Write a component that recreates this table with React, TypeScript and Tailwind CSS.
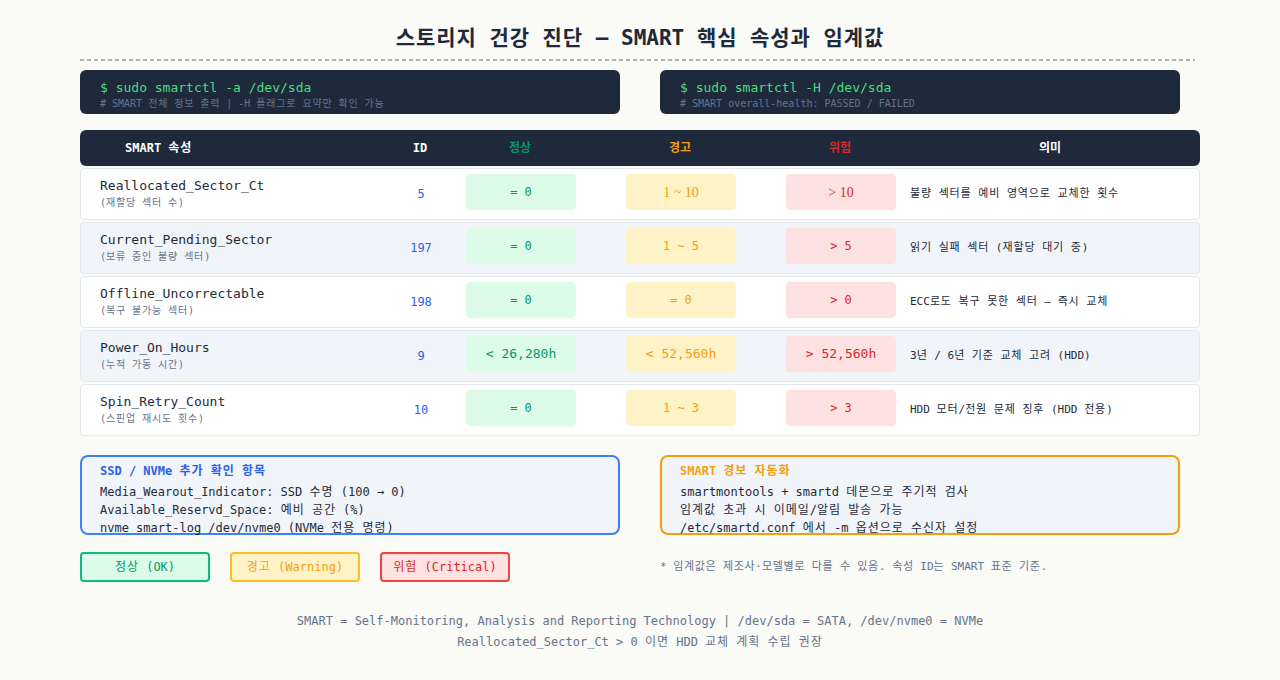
import React from 'react';

type Row = {
  name: string;
  sub: string;
  id: string;
  ok: string;
  warn: string;
  crit: string;
  meaning: string;
  big?: boolean;
  serif?: boolean;
};

const rows: Row[] = [
  { name: 'Reallocated_Sector_Ct', sub: '(재할당 섹터 수)', id: '5', ok: '= 0', warn: '1 ~ 10', crit: '> 10', meaning: '불량 섹터를 예비 영역으로 교체한 횟수', serif: true },
  { name: 'Current_Pending_Sector', sub: '(보류 중인 불량 섹터)', id: '197', ok: '= 0', warn: '1 ~ 5', crit: '> 5', meaning: '읽기 실패 섹터 (재할당 대기 중)' },
  { name: 'Offline_Uncorrectable', sub: '(복구 불가능 섹터)', id: '198', ok: '= 0', warn: '= 0', crit: '> 0', meaning: 'ECC로도 복구 못한 섹터 — 즉시 교체' },
  { name: 'Power_On_Hours', sub: '(누적 가동 시간)', id: '9', ok: '< 26,280h', warn: '< 52,560h', crit: '> 52,560h', meaning: '3년 / 6년 기준 교체 고려 (HDD)', big: true },
  { name: 'Spin_Retry_Count', sub: '(스핀업 재시도 횟수)', id: '10', ok: '= 0', warn: '1 ~ 3', crit: '> 3', meaning: 'HDD 모터/전원 문제 징후 (HDD 전용)' },
];

const grid = 'grid grid-cols-[300px_80px_120px_200px_120px_300px] items-center';

function K({ children, wide = 'tracking-[0.08em]' }: { children: string; wide?: string }) {
  return (
    <span>
      {children.split(/([\uAC00-\uD7A3]+)/).map((part, i) =>
        /[\uAC00-\uD7A3]/.test(part) ? (
          <span key={i} className={wide}>{part}</span>
        ) : (
          <React.Fragment key={i}>{part}</React.Fragment>
        )
      )}
    </span>
  );
}

function badgeSize(r: Row) {
  if (r.serif) return "font-['Liberation_Serif',serif] text-[14px]";
  return r.big ? 'text-[13px]' : 'text-[12px]';
}

export default function App() {
  return (
    <div className="w-[1280px] h-[680px] bg-[#fafaf6] font-['DejaVu_Sans_Mono','Noto_Sans_CJK_KR',monospace] text-[#1e293b] px-[80px] pt-[24px] overflow-hidden">
      <h1 className="text-center text-[21px] leading-[28px] font-bold text-[#1e293b]">
        <K wide="tracking-[0.045em]">스토리지 건강 진단 — SMART 핵심 속성과 임계값</K>
      </h1>
      <div className="mt-[7px] w-[1115px] h-[2px] bg-[repeating-linear-gradient(90deg,#b4b4b4_0_4px,transparent_4px_7px)]" />

      <div className="mt-[9px] flex gap-[40px]">
        <div className="w-[540px] h-[44px] bg-[#1e293b] rounded-[6px] px-[20px] pt-[10px]">
          <div className="text-[13px] leading-[16px] text-[#4ade80]">$ sudo smartctl -a /dev/sda</div>
          <div className="text-[10px] leading-[15px] text-[#64748b]"><K># SMART 전체 정보 출력 | -H 플래그로 요약만 확인 가능</K></div>
        </div>
        <div className="w-[520px] h-[44px] bg-[#1e293b] rounded-[6px] px-[20px] pt-[10px]">
          <div className="text-[13px] leading-[16px] text-[#4ade80]">$ sudo smartctl -H /dev/sda</div>
          <div className="text-[10px] leading-[15px] text-[#64748b]"># SMART overall-health: PASSED / FAILED</div>
        </div>
      </div>

      <div className="mt-[16px] flex flex-col gap-[2px]">
        <div className={`${grid} h-[36px] bg-[#1e293b] rounded-[6px] text-[12px] font-bold`}>
          <div className="pl-[45px] text-white"><K>SMART 속성</K></div>
          <div className="text-center text-white">ID</div>
          <div className="text-center text-[#059669]">정상</div>
          <div className="text-center text-[#f59e0b]">경고</div>
          <div className="text-center text-[#dc2626]">위험</div>
          <div className="text-center text-white">의미</div>
        </div>
        {rows.map((r, i) => (
          <div
            key={r.name}
            className={`${grid} h-[52px] rounded-[4px] border border-[#e2e8f0] ${i % 2 === 1 ? 'bg-[#f1f5f9]' : 'bg-white'}`}
          >
            <div className="pl-[19px]">
              <div className="text-[13px] leading-[18px] text-[#1e293b]">{r.name}</div>
              <div className="text-[10px] leading-[16px] text-[#64748b]"><K>{r.sub}</K></div>
            </div>
            <div className="text-center text-[12px] text-[#2563eb]">{r.id}</div>
            <div className={`justify-self-center self-start mt-[5px] w-[110px] h-[36px] rounded-[4px] bg-[#dcfce7] text-[#059669] flex items-center justify-center ${r.big ? 'text-[13px]' : 'text-[12px]'}`}>
              {r.ok}
            </div>
            <div className={`justify-self-center self-start mt-[5px] w-[110px] h-[36px] rounded-[4px] bg-[#fef3c7] text-[#f59e0b] flex items-center justify-center ${badgeSize(r)}`}>
              {r.warn}
            </div>
            <div className={`justify-self-center self-start mt-[5px] w-[110px] h-[36px] rounded-[4px] bg-[#fee2e2] text-[#dc2626] flex items-center justify-center ${badgeSize(r)}`}>
              {r.crit}
            </div>
            <div className="pl-[9px] text-[11px] text-[#1e293b]"><K>{r.meaning}</K></div>
          </div>
        ))}
      </div>

      <div className="mt-[19px] flex gap-[40px]">
        <div className="w-[540px] h-[80px] border-2 border-[#3b82f6] rounded-[8px] bg-[#f1f5f9] px-[18px] pt-[5px] text-[12px]">
          <div className="leading-[18px] font-bold text-[#2563eb]"><K>SSD / NVMe 추가 확인 항목</K></div>
          <div className="mt-[3px] leading-[18px]"><K>Media_Wearout_Indicator: SSD 수명 (100 → 0)</K></div>
          <div className="leading-[18px]"><K>Available_Reservd_Space: 예비 공간 (%)</K></div>
          <div className="leading-[18px]"><K>nvme smart-log /dev/nvme0 (NVMe 전용 명령)</K></div>
        </div>
        <div className="w-[520px] h-[80px] border-2 border-[#f59e0b] rounded-[8px] bg-[#f1f5f9] px-[18px] pt-[5px] text-[12px]">
          <div className="leading-[18px] font-bold text-[#f59e0b]"><K>SMART 경보 자동화</K></div>
          <div className="mt-[3px] leading-[18px]"><K>smartmontools + smartd 데몬으로 주기적 검사</K></div>
          <div className="leading-[18px]"><K>임계값 초과 시 이메일/알림 발송 가능</K></div>
          <div className="leading-[18px]"><K>/etc/smartd.conf 에서 -m 옵션으로 수신자 설정</K></div>
        </div>
      </div>

      <div className="mt-[17px] grid grid-cols-[580px_1fr] items-center">
        <div className="flex gap-[20px] text-[12px]">
          <div className="w-[130px] h-[30px] rounded-[4px] border-2 border-[#10b981] bg-[#dcfce7] text-[#059669] flex items-center justify-center"><K>정상 (OK)</K></div>
          <div className="w-[130px] h-[30px] rounded-[4px] border-2 border-[#fbbf24] bg-[#fef3c7] text-[#f59e0b] flex items-center justify-center"><K>경고 (Warning)</K></div>
          <div className="w-[130px] h-[30px] rounded-[4px] border-2 border-[#ef4444] bg-[#fee2e2] text-[#dc2626] flex items-center justify-center"><K>위험 (Critical)</K></div>
        </div>
        <div className="text-[11px] text-[#64748b]"><K wide="tracking-[0.06em]">* 임계값은 제조사·모델별로 다를 수 있음. 속성 ID는 SMART 표준 기준.</K></div>
      </div>

      <div className="mt-[29px] text-center text-[12px] leading-[21px] text-[#64748b]">
        <div>SMART = Self-Monitoring, Analysis and Reporting Technology | /dev/sda = SATA, /dev/nvme0 = NVMe</div>
        <div><K>Reallocated_Sector_Ct &gt; 0 이면 HDD 교체 계획 수립 권장</K></div>
      </div>
    </div>
  );
}
